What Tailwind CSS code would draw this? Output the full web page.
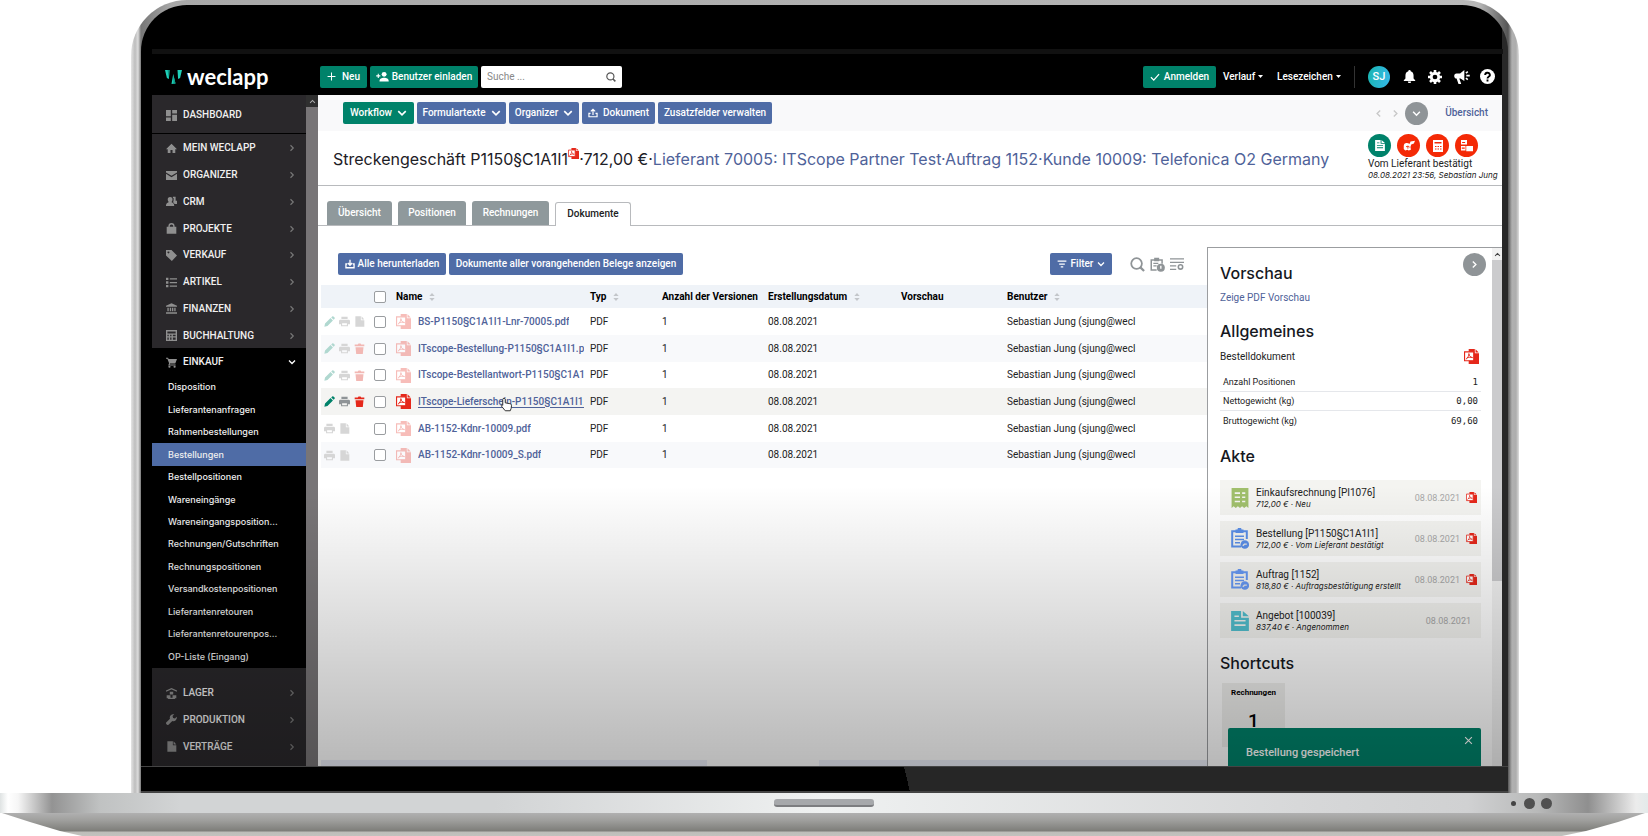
<!DOCTYPE html>
<html lang="de">
<head>
<meta charset="utf-8">
<meta name="viewport" content="width=device-width, initial-scale=1">
<title>weclapp – Streckengeschäft P1150§C1A1I1</title>
<script src="https://cdn.jsdelivr.net/npm/@tailwindcss/browser@4"></script>
</head>
<body class="flex min-h-screen flex-col bg-white font-['Roboto','Noto_Sans',sans-serif] text-[10px] leading-[14px] text-[#222]">

<!-- Icon library -->
<svg class="hidden" aria-hidden="true">
  <defs>
    <symbol id="chev-r" viewBox="0 0 16 16"><path d="M5 2.5 10.5 8 5 13.5" fill="none" stroke="currentColor" stroke-width="2.4"/></symbol>
    <symbol id="chev-l" viewBox="0 0 16 16"><path d="M11 2.5 5.5 8l5.500 5.500" fill="none" stroke="currentColor" stroke-width="2.4"/></symbol>
    <symbol id="chev-d" viewBox="0 0 16 16"><path d="M2 5 8 11 14 5" fill="none" stroke="currentColor" stroke-width="2.600"/></symbol>
    <symbol id="chev-u" viewBox="0 0 16 16"><path d="M2.500 11 8 5.500 13.500 11" fill="none" stroke="currentColor" stroke-width="2.4"/></symbol>
    <symbol id="caret" viewBox="0 0 10 6"><path d="M0 0h10L5 6z" fill="currentColor"/></symbol>
    <symbol id="plus" viewBox="0 0 16 16"><path d="M8 1v14M1 8h14" stroke="currentColor" stroke-width="1.800"/></symbol>
    <symbol id="x" viewBox="0 0 16 16"><path d="m2 2 12 12M14 2 2 14" stroke="currentColor" stroke-width="2"/></symbol>
    <symbol id="check" viewBox="0 0 16 16"><path d="m1.500 8.500 4.500 4.500L14.500 3.500" fill="none" stroke="currentColor" stroke-width="2"/></symbol>
    <symbol id="search" viewBox="0 0 16 16"><circle cx="7" cy="7" r="5.700" fill="none" stroke="currentColor" stroke-width="1.900"/><path d="m10.800 10.800 4.200 4.200" stroke="currentColor" stroke-width="2.400"/></symbol>
    <symbol id="user-plus" viewBox="0 0 24 20"><circle cx="15" cy="6" r="4.500" fill="currentColor"/><path d="M6.500 19c0-5 4-6.500 8.500-6.500s8.500 1.500 8.500 6.500zM3.200 5h2v2.800H8v2H5.200v2.800h-2V9.800H.4v-2h2.800z" fill="currentColor"/></symbol>
    <symbol id="upload" viewBox="0 0 16 16"><path d="M8 11V2.500M4.500 5.500 8 2l3.500 3.500M4 8.500H1.500V14h13V8.500H12" fill="none" stroke="currentColor" stroke-width="1.900"/></symbol>
    <symbol id="download" viewBox="0 0 16 16"><path d="M8 1v8.500M4.500 6.500 8 10l3.500-3.500M3.500 8h-2v6h13V8h-2" fill="none" stroke="currentColor" stroke-width="2.100"/></symbol>
    <symbol id="filter" viewBox="0 0 16 16"><path d="M1 3.500h14M3.500 8h9M6 12.500h4" stroke="currentColor" stroke-width="2"/></symbol>
    <symbol id="dash" viewBox="0 0 16 16"><path d="M0 0h7v9H0zM9 0h7v5H9zM0 11h7v5H0zM9 7h7v9H9z" fill="currentColor"/></symbol>
    <symbol id="home" viewBox="0 0 16 16"><path d="M8 1 0 9h2.500v5.500h4V10h3v4.500h4V9H16z" fill="currentColor"/></symbol>
    <symbol id="mail" viewBox="0 0 16 16"><path d="M0 1.500h16V3.500L8 8.500 0 3.500zM0 5.500l8 5 8-5V14.500H0z" fill="currentColor"/></symbol>
    <symbol id="crm" viewBox="0 0 16 16"><path d="M6 1.500c2.500 0 3.500 1.800 3.500 3.700 0 1.600-.6 2.800-1.500 3.600.8 1.200 4 1.200 4 5.700H0c0-4.500 3.200-4.500 4-5.700C3.100 8 2.500 6.800 2.500 5.200c0-1.900 1-3.700 3.500-3.700z" fill="currentColor"/><path d="M10 1h4v6h2v4.500h-3.500c-.5-1.200-1.300-2-2.300-2.500.6-1 .9-2.200.9-3.800V3H10z" fill="currentColor"/></symbol>
    <symbol id="bag" viewBox="0 0 16 16"><path d="M1 5.500h14v10H1z" fill="currentColor"/><path d="M4.500 7V4.500a3.500 3.500 0 0 1 7 0V7" fill="none" stroke="currentColor" stroke-width="2"/></symbol>
    <symbol id="tag" viewBox="0 0 16 16"><path fill-rule="evenodd" d="M0 0h8l8 8-7.500 8L0 8zm3.500 2a1.400 1.400 0 1 0 .1 0z" fill="currentColor"/></symbol>
    <symbol id="list" viewBox="0 0 16 16"><path d="M0 1h3.500v3.500H0zM0 6.300h3.500v3.500H0zM0 11.500h3.500V15H0zM5.500 1.800H16v1.900H5.500zM5.500 7.100H16V9H5.500zM5.500 12.300H16v1.900H5.500z" fill="currentColor"/></symbol>
    <symbol id="bank" viewBox="0 0 16 16"><path d="M8 .5 16 4v1.500H0V4zM2 7h2v5H2zM5.500 7h2v5h-2zM8.700 7h2v5h-2zM12 7h2v5h-2zM0 13.500h16V15.500H0z" fill="currentColor"/></symbol>
    <symbol id="calc" viewBox="0 0 16 16"><path fill-rule="evenodd" d="M0 0h16v16H0zm2 2v3h12V2zm0 5v2h2V7zm4 0v2h2V7zm4 0v2h4V7zm-8 4v3h2v-3zm4 0v3h2v-3zm4 0v3h4v-3z" fill="currentColor"/></symbol>
    <symbol id="cart" viewBox="0 0 16 16"><path d="M0 1h3l.8 2H16l-2.500 6.500H5.800l-.4 1.300H14v1.500H3.200L4.500 9 2 2.500H0z" fill="currentColor"/><circle cx="5" cy="14.200" r="1.600" fill="currentColor"/><circle cx="12.500" cy="14.200" r="1.600" fill="currentColor"/></symbol>
    <symbol id="stock" viewBox="0 0 16 16"><path d="M0 4.500 8 1l8 3.500M3 15h10" fill="none" stroke="currentColor" stroke-width="1.800"/><path d="M5.500 5.500h5v4h-5zM1 10.500h5.500V15H1zM9.500 10.500H15V15H9.500z" fill="currentColor"/></symbol>
    <symbol id="wrench" viewBox="0 0 16 16"><path d="M15.500 4 13 6.500 10.300 5.700 9.500 3 12 .5a5 5 0 0 0-6.200 6.400L.6 12a2 2 0 0 0 0 2.800l.6.600a2 2 0 0 0 2.800 0l5.200-5.200A5 5 0 0 0 15.500 4z" fill="currentColor"/></symbol>
    <symbol id="doc" viewBox="0 0 16 16"><path d="M2 .5h8V6h5v9.500H2zM11 .5 15 5h-4z" fill="currentColor"/></symbol>
    <symbol id="doc-lines" viewBox="0 0 16 18"><path fill-rule="evenodd" d="M0 0h9v6h7v12H0zm3 8v1.500h10V8zm0 4v1.500h10V12zM3 4v1.500h4V4zM10.500 0 16 4.800h-5.500z" fill="currentColor"/></symbol>
    <symbol id="receipt" viewBox="0 0 16 19"><path fill-rule="evenodd" d="M0 0h16v19l-2-1.700-2 1.700-2-1.700L8 19l-2-1.700L4 19l-2-1.700L0 19zm3 4v1.600h5V4zm7 0v1.600h3V4zM3 8v1.600h5V8zm7 0v1.600h3V8zm-7 4v1.600h5V12zm7 0v1.600h3V12z" fill="currentColor"/></symbol>
    <symbol id="order" viewBox="0 0 18 21"><path d="M10 18.500H1.200V3.200h14.600V11" fill="none" stroke="currentColor" stroke-width="2"/><path d="M4.500 1.500h2a2 2 0 0 1 4 0h2V5h-8zM4 7.500h9v1.600H4zM4 10.700h9v1.600H4zM4 14h5v1.600H4z" fill="currentColor"/><circle cx="13.800" cy="16.500" r="4.300" fill="currentColor"/><path d="m11.800 17.800 1.600-1.600h2.400" fill="none" stroke="#e8e8e8" stroke-width="1.300"/></symbol>
    <symbol id="pencil" viewBox="0 0 16 16"><path d="m.5 15.500 1-4.500L9.500 3l3.500 3.500-8 8zM10.500 2 12 .600c.5-.5 1.200-.5 1.700 0l1.700 1.700c.5.500.5 1.200 0 1.700L14 5.500z" fill="currentColor"/></symbol>
    <symbol id="print" viewBox="0 0 16 16"><path fill-rule="evenodd" d="M3.500 1h9v3.500h-9zM2 5.500h12a2 2 0 0 1 2 2v4.500h-3v3H3v-3H0V7.500a2 2 0 0 1 2-2zm2.500 5v3h7v-3z" fill="currentColor"/></symbol>
    <symbol id="trash" viewBox="0 0 16 16"><path d="M1 2.200h4.500L6.500.8h3l1 1.400H15V4.800H1zM2.200 6h11.600l-1 10H3.200z" fill="currentColor"/></symbol>
    <symbol id="pdf" viewBox="0 0 16 16"><path d="M5 0h6.500v4.500H16V16H5z" fill="#e5281b"/><path d="M12.300.300 15.700 3.700h-3.400z" fill="#e5281b"/><path d="M.6 3h9.800v9.500H.6z" fill="#fff" stroke="#e5281b" stroke-width="1.200"/><path d="M2 11c2-1.500 3.500-4 3.200-6.200M5.200 5c.4 2.500 1.800 4 4 4.200M3 9.600c2-.8 4-1 6-.6" fill="none" stroke="#e5281b" stroke-width="1"/></symbol>
    <symbol id="sort" viewBox="0 0 8 12"><path d="M4 0 8 4.500H0zM0 7.500h8L4 12z" fill="currentColor"/></symbol>
    <symbol id="clip" viewBox="0 0 18 18"><path d="M8 15.500H1.500v-12h13V8" fill="none" stroke="currentColor" stroke-width="1.800"/><path d="M5 1h6v4H5zM4 7h6v1.300H4zM4 10h4v1.300H4z" fill="currentColor"/><circle cx="13" cy="13" r="4.800" fill="currentColor"/><path d="M13 10.500v3.500" stroke="#fff" stroke-width="1.600"/></symbol>
    <symbol id="listcfg" viewBox="0 0 18 18"><path d="M0 2.500h18M0 7h18M0 11.500h8M0 16h8" stroke="currentColor" stroke-width="1.600"/><circle cx="13.500" cy="12.800" r="2.800" fill="none" stroke="currentColor" stroke-width="2"/></symbol>
    <symbol id="bell" viewBox="0 0 16 16"><path d="M8 0a1.500 1.500 0 0 1 1.500 1.500C12 2.200 13 4.300 13 7v3.500l2 2V13.500H1v-1l2-2V7c0-2.700 1-4.800 3.500-5.500A1.500 1.500 0 0 1 8 0zM6 14.300h4a2 2 0 0 1-4 0z" fill="currentColor"/></symbol>
    <symbol id="gear" viewBox="0 0 16 16"><circle cx="8" cy="8" r="4.300" fill="none" stroke="currentColor" stroke-width="3.200"/><path d="M8 0v3M8 13v3M0 8h3M13 8h3M2.300 2.300l2.200 2.200M11.500 11.500l2.200 2.200M2.300 13.700l2.200-2.200M11.500 4.500l2.200-2.200" stroke="currentColor" stroke-width="3"/></symbol>
    <symbol id="horn" viewBox="0 0 20 18"><path d="M13 0v14L8 11 6.500 11 9 18H5.500L3 11C1 11 0 9.700 0 7.700s1-3.300 3-3.300h4.500z" fill="currentColor"/><path d="M15 4 17.500 2M15.500 7.200H20M15 10.500 17.500 12.500" stroke="currentColor" stroke-width="2"/></symbol>
    <symbol id="help" viewBox="0 0 16 16"><circle cx="8" cy="8" r="8" fill="#fff"/><path d="M5.500 6.300a2.500 2.300 0 1 1 3.700 2C8.300 8.900 8 9.200 8 10.200M8 11.300v2" fill="none" stroke="#000" stroke-width="2"/></symbol>
  </defs>
</svg>

<!-- Laptop lid -->
<div class="ml-[131px] mr-[129px] flex flex-1 flex-col rounded-t-[56px] bg-[linear-gradient(90deg,#e4e4e4_0,#bdbdbd_4px,#dcdcdc_7px,#777_10px,#a8a8a8_40px,#b8b8b8_calc(100%-40px),#555_calc(100%-11px),#b0b0b0_calc(100%-7px),#adadad_calc(100%-3px),#ddd_100%)] pt-[5px] pr-[11px] pl-[10px]">
  <div class="flex flex-1 flex-col overflow-hidden rounded-t-[46px] bg-[linear-gradient(90deg,#000_calc(100%-6px),#282828_calc(100%-6px))]">
    <div class="mr-[5px] ml-[11px] mt-[44px] h-[5px] bg-[#111]"></div>

    <!-- Application screen -->
    <div class="relative mr-[6px] ml-[11px] flex flex-1 flex-col">

      <header class="flex h-[41px] items-center bg-black pt-[4px] text-white">
        <a href="#" class="flex w-[168px] items-center gap-[5px] pl-[13px] font-['Lato',sans-serif] text-[22px] leading-[24px] font-bold">
          <svg class="h-[14px] w-[17px] shrink-0" viewBox="0 0 17 14"><path d="M0 0h4.500l-.6 9-2-1zM17 0h-4.500l.6 9 2-1zM8.200 4 10.500 13.500 6.500 14z" fill="#1fd0b8"/><path d="M2.500 0h2l-.6 9zM8.200 4 10.500 13.500 8.500 13.700z" fill="#0a9a86"/></svg>
          weclapp
        </a>
        <button class="mr-[3px] flex h-[22px] w-[47px] items-center justify-center gap-[6px] rounded-[2px] bg-[#00826a] font-medium"><svg class="size-[9px]"><use href="#plus"/></svg>Neu</button>
        <button class="mr-[3px] flex h-[22px] w-[108px] items-center justify-center gap-[3px] rounded-[2px] bg-[#00826a] font-medium whitespace-nowrap"><svg class="h-[11px] w-[13px]"><use href="#user-plus"/></svg>Benutzer einladen</button>
        <label class="flex h-[22px] w-[141px] items-center rounded-[2px] bg-white px-[6px] text-[#555]">
          <input type="text" aria-label="Suche" placeholder="Suche ..." class="min-w-0 flex-1 bg-transparent text-[10px] outline-none placeholder:text-[#888]">
          <svg class="size-[10px]"><use href="#search"/></svg>
        </label>
        <div class="ml-auto flex items-center">
          <button class="mr-[7px] flex h-[22px] w-[73px] items-center justify-center gap-[4px] rounded-[2px] bg-[#00826a] font-medium"><svg class="size-[10px]"><use href="#check"/></svg>Anmelden</button>
          <button class="mr-[14px] flex w-[40px] items-center gap-[3px] font-medium">Verlauf<svg class="h-[3px] w-[5px] shrink-0"><use href="#caret"/></svg></button>
          <button class="mr-[13px] flex w-[64px] items-center gap-[3px] font-medium">Lesezeichen<svg class="h-[3px] w-[5px] shrink-0"><use href="#caret"/></svg></button>
          <span class="mr-[13px] h-[22px] w-px bg-[#333]"></span>
          <span class="mr-[13px] flex size-[22px] items-center justify-center rounded-full bg-[linear-gradient(100deg,#19b5b0,#35b8ea)] text-[11px] font-medium">SJ</span>
          <button aria-label="Benachrichtigungen" class="mr-[12px]"><svg class="size-[13px]"><use href="#bell"/></svg></button>
          <button aria-label="Einstellungen" class="mr-[12px]"><svg class="size-[14px]"><use href="#gear"/></svg></button>
          <button aria-label="Neuigkeiten" class="mr-[10px]"><svg class="h-[14px] w-[16px]"><use href="#horn"/></svg></button>
          <button aria-label="Hilfe" class="mr-[7px]"><svg class="size-[15px]"><use href="#help"/></svg></button>
        </div>
      </header>

      <div class="flex flex-1">
        <!-- Sidebar -->
        <nav class="flex w-[154px] flex-col bg-[#2a282b] text-[10px] font-medium text-[#f0f0f0]">
          <a href="#" class="flex h-[39px] items-center gap-[6px] border-b border-black pt-[2px] pl-[14px]"><svg class="size-[11px] text-[#8f8f8f]"><use href="#dash"/></svg>DASHBOARD</a>
          <ul class="grid h-[214px] auto-rows-fr [&_a]:flex [&_a]:h-full [&_a]:items-center [&_a]:gap-[6px] [&_a]:pt-[2px] [&_a]:pr-[10px] [&_a]:pl-[14px] [&_svg]:size-[11px] [&_svg]:text-[#8f8f8f] [&_svg:last-child]:ml-auto [&_svg:last-child]:size-[8px] [&_svg:last-child]:text-[#777]">
            <li><a href="#"><svg><use href="#home"/></svg>MEIN WECLAPP<svg><use href="#chev-r"/></svg></a></li>
            <li><a href="#"><svg><use href="#mail"/></svg>ORGANIZER<svg><use href="#chev-r"/></svg></a></li>
            <li><a href="#"><svg><use href="#crm"/></svg>CRM<svg><use href="#chev-r"/></svg></a></li>
            <li><a href="#"><svg><use href="#bag"/></svg>PROJEKTE<svg><use href="#chev-r"/></svg></a></li>
            <li><a href="#"><svg><use href="#tag"/></svg>VERKAUF<svg><use href="#chev-r"/></svg></a></li>
            <li><a href="#"><svg><use href="#list"/></svg>ARTIKEL<svg><use href="#chev-r"/></svg></a></li>
            <li><a href="#"><svg><use href="#bank"/></svg>FINANZEN<svg><use href="#chev-r"/></svg></a></li>
            <li><a href="#"><svg><use href="#calc"/></svg>BUCHHALTUNG<svg><use href="#chev-r"/></svg></a></li>
          </ul>
          <div class="bg-black">
            <a href="#" class="flex h-[28px] items-center gap-[6px] pr-[10px] pl-[14px]"><svg class="size-[11px] text-[#8f8f8f]"><use href="#cart"/></svg>EINKAUF<svg class="ml-auto size-[8px] text-white"><use href="#chev-d"/></svg></a>
            <ul class="grid h-[292px] auto-rows-fr font-['Inter',sans-serif] text-[9px] [&_a]:flex [&_a]:h-full [&_a]:items-center [&_a]:pl-[16px]">
              <li><a href="#">Disposition</a></li>
              <li><a href="#">Lieferantenanfragen</a></li>
              <li><a href="#">Rahmenbestellungen</a></li>
              <li class="bg-[#4f6ca6]"><a href="#" aria-current="page">Bestellungen</a></li>
              <li><a href="#">Bestellpositionen</a></li>
              <li><a href="#">Wareneingänge</a></li>
              <li><a href="#">Wareneingangsposition...</a></li>
              <li><a href="#">Rechnungen/Gutschriften</a></li>
              <li><a href="#">Rechnungspositionen</a></li>
              <li><a href="#">Versandkostenpositionen</a></li>
              <li><a href="#">Lieferantenretouren</a></li>
              <li><a href="#">Lieferantenretourenpos...</a></li>
              <li><a href="#">OP-Liste (Eingang)</a></li>
            </ul>
          </div>
          <ul class="mt-[11px] grid h-[80px] auto-rows-fr [&_a]:flex [&_a]:h-full [&_a]:items-center [&_a]:gap-[6px] [&_a]:pt-[2px] [&_a]:pr-[10px] [&_a]:pl-[14px] [&_svg]:size-[11px] [&_svg]:text-[#8f8f8f] [&_svg:last-child]:ml-auto [&_svg:last-child]:size-[8px] [&_svg:last-child]:text-[#777]">
            <li><a href="#"><svg><use href="#stock"/></svg>LAGER<svg><use href="#chev-r"/></svg></a></li>
            <li><a href="#"><svg><use href="#wrench"/></svg>PRODUKTION<svg><use href="#chev-r"/></svg></a></li>
            <li><a href="#"><svg><use href="#doc"/></svg>VERTRÄGE<svg><use href="#chev-r"/></svg></a></li>
          </ul>
        </nav>
        <div class="flex w-[12px] flex-col items-center bg-[#787577]"><span class="flex h-[12px] w-full items-center justify-center bg-[#2f2f2f] text-[#aaa]"><svg class="size-[7px]"><use href="#chev-u"/></svg></span></div>

        <!-- Content -->
        <main class="flex min-w-0 flex-1 flex-col bg-white">
          <div class="flex h-[36px] items-center gap-[3px] bg-[#f9f9fa] pr-[14px] pl-[25px] font-medium text-white [&>button]:flex [&>button]:h-[22px] [&>button]:items-center [&>button]:justify-center [&>button]:gap-[5px] [&>button]:rounded-[2px] [&>button]:whitespace-nowrap">
            <button class="w-[71px] bg-[#00826a]">Workflow<svg class="size-[10px]"><use href="#chev-d"/></svg></button>
            <button class="w-[89px] bg-[#4f6ca6]">Formulartexte<svg class="size-[10px]"><use href="#chev-d"/></svg></button>
            <button class="w-[70px] bg-[#4f6ca6]">Organizer<svg class="size-[10px]"><use href="#chev-d"/></svg></button>
            <button class="w-[73px] bg-[#4f6ca6]"><svg class="size-[10px]"><use href="#upload"/></svg>Dokument</button>
            <button class="w-[114px] bg-[#4f6ca6]">Zusatzfelder verwalten</button>
            <div class="ml-auto flex items-center">
              <svg class="mr-[8px] size-[9px] text-[#c8c8c8]"><use href="#chev-l"/></svg>
              <svg class="mr-[5px] size-[9px] text-[#c8c8c8]"><use href="#chev-r"/></svg>
              <button aria-label="Mehr" class="mr-[17px] flex size-[23px] items-center justify-center rounded-full bg-[#8f9497]"><svg class="size-[9px]"><use href="#chev-d"/></svg></button>
              <a href="#" class="text-[#4f6299]">Übersicht</a>
            </div>
          </div>

          <div class="flex h-[55px] items-start justify-between border-b border-[#b8babd] pl-[15px]">
            <h1 class="flex items-start pt-[17px] font-['Inter',sans-serif] text-[16px] leading-[22px] whitespace-nowrap text-[#1d2026]">Streckengeschäft P1150§C1A1I1<svg class="size-[11px]"><use href="#pdf"/></svg>·712,00 €·<a href="#" class="text-[#4f6299]">Lieferant 70005: ITScope Partner Test·Auftrag 1152·Kunde 10009: Telefonica O2 Germany</a></h1>
            <div class="w-[134px] pt-[3px] whitespace-nowrap">
              <div class="flex gap-[6px] text-white [&>span]:flex [&>span]:size-[23px] [&>span]:items-center [&>span]:justify-center [&>span]:rounded-full">
                <span class="bg-[#00826a]"><svg class="h-[11px] w-[10px]"><use href="#doc-lines"/></svg></span>
                <span class="bg-[#f42a06]"><svg class="size-[12px]" viewBox="0 0 16 16"><path d="M1 8c0-3 2-4.500 4.500-4L9 5l1-3 6-1-1.500 3.500L11 6l-1 3 .5 4-3 1L6 13l-3 1-2-2z" fill="#fff"/><path d="m4 9 3-1 2 2M6.500 8v3.500" stroke="#f42a06" fill="none" stroke-width="1.200"/></svg></span>
                <span class="bg-[#f42a06]"><svg class="h-[12px] w-[10px]" viewBox="0 0 10 12"><path fill-rule="evenodd" d="M0 0h10v12H0zm1.500 2v1.500h7V2zM2 6v1h1.500V6zm2.500 0v1H6V6zM7 6v1h1.500V6zM2 8.500v1h1.500v-1zm2.500 0v1H6v-1zm2.500 0v1h1.500v-1z" fill="#fff"/></svg></span>
                <span class="bg-[#f42a06]"><svg class="size-[12px]" viewBox="0 0 16 16"><path fill-rule="evenodd" d="M0 0h8v6H0zm1.500 2.500V4h4V2.500zM0 8h6v6H0zm1 2v1.500h4V10zM7 8h9v7H7z" fill="#fff"/></svg></span>
              </div>
              <p class="text-[10px] leading-[13px]">Vom Lieferant bestätigt</p>
              <p class="font-['Inter',sans-serif] text-[8px] leading-[10px] italic">08.08.2021 23:56, Sebastian Jung</p>
            </div>
          </div>

          <div role="tablist" class="flex h-[40px] items-end gap-[6px] border-b border-[#b8babd] pl-[9px] font-medium text-white [&>button]:h-[24px] [&>button]:rounded-t-[3px]">
            <button role="tab" class="w-[65px] bg-[#8f999c]">Übersicht</button>
            <button role="tab" class="w-[68px] bg-[#8f999c]">Positionen</button>
            <button role="tab" class="w-[77px] bg-[#8f999c]">Rechnungen</button>
            <button role="tab" aria-selected="true" class="-mb-px w-[76px] border border-b-0 border-[#b8babd] bg-white pb-[2px] text-[#222]">Dokumente</button>
          </div>

          <div class="flex min-h-0 flex-1">
            <section class="flex min-w-0 flex-1 flex-col pt-[27px] pl-[3px]">
              <div class="flex items-center gap-[3px] pr-[23px] pl-[17px] font-medium text-white">
                <button class="flex h-[22px] w-[108px] items-center justify-center gap-[3px] rounded-[2px] bg-[#4f6ca6] whitespace-nowrap"><svg class="size-[10px]"><use href="#download"/></svg>Alle herunterladen</button>
                <button class="flex h-[22px] w-[234px] items-center justify-center rounded-[2px] bg-[#4f6ca6] whitespace-nowrap">Dokumente aller vorangehenden Belege anzeigen</button>
                <button class="mr-[15px] ml-auto flex h-[22px] w-[62px] items-center justify-center gap-[4px] rounded-[2px] bg-[#4f6ca6]"><svg class="size-[10px]"><use href="#filter"/></svg>Filter<svg class="size-[8px]"><use href="#chev-d"/></svg></button>
                <button aria-label="Suchen" class="mr-[2px] text-[#8f9497]"><svg class="size-[15px]"><use href="#search"/></svg></button>
                <button aria-label="Zwischenablage" class="mr-[2px] text-[#8f9497]"><svg class="size-[15px]"><use href="#clip"/></svg></button>
                <button aria-label="Spalten" class="text-[#8f9497]"><svg class="size-[14px]"><use href="#listcfg"/></svg></button>
              </div>

              <table class="mt-[10px] w-full table-fixed text-left text-[10px] whitespace-nowrap [&_input]:block [&_input]:size-[12px] [&_input]:appearance-none [&_input]:rounded-[2px] [&_input]:border [&_input]:border-[#9a9da0] [&_input]:bg-white [&_td]:p-0 [&_th]:p-0 [&_tbody_tr]:h-[27px] [&_tbody_tr:nth-child(3n)]:h-[26px]">
                <colgroup><col class="w-[53px]"><col class="w-[22px]"><col class="w-[194px]"><col class="w-[72px]"><col class="w-[106px]"><col class="w-[133px]"><col class="w-[106px]"><col></colgroup>
                <thead class="bg-[#eff3f8] text-black [&_svg]:ml-[7px] [&_svg]:inline [&_svg]:h-[8px] [&_svg]:w-[6px] [&_svg]:text-[#c3c6ca]">
                  <tr class="h-[23px]">
                    <th aria-label="Aktionen"></th>
                    <th><input type="checkbox" aria-label="Alle auswählen"></th>
                    <th>Name<svg><use href="#sort"/></svg></th>
                    <th>Typ<svg><use href="#sort"/></svg></th>
                    <th>Anzahl der Versionen</th>
                    <th>Erstellungsdatum<svg><use href="#sort"/></svg></th>
                    <th>Vorschau</th>
                    <th>Benutzer<svg><use href="#sort"/></svg></th>
                  </tr>
                </thead>
                <tbody class="[&_a]:block [&_a]:max-w-[166px] [&_a]:overflow-hidden [&_a]:font-medium [&_a]:text-[#4f6299] [&_td:nth-child(1)>div]:flex [&_td:nth-child(1)>div]:gap-[4px] [&_td:nth-child(1)>div]:pl-[3px] [&_td:nth-child(1)_svg]:size-[11px] [&_td:nth-child(3)>div]:flex [&_td:nth-child(3)>div]:items-center [&_td:nth-child(3)>div]:gap-[7px] [&_td:nth-child(3)_svg]:size-[15px] [&_td:nth-child(3)_svg]:shrink-0">
                  <tr>
                    <td><div><svg class="text-[#b0d8d0]"><use href="#pencil"/></svg><svg class="text-[#d6d6d6]"><use href="#print"/></svg><svg class="text-[#d6d6d6]"><use href="#doc"/></svg></div></td>
                    <td><input type="checkbox" aria-label="Zeile 1"></td>
                    <td><div><svg class="opacity-30"><use href="#pdf"/></svg><a href="#">BS-P1150§C1A1I1-Lnr-70005.pdf</a></div></td>
                    <td>PDF</td><td>1</td><td>08.08.2021</td><td></td><td>Sebastian Jung (sjung@wecl</td>
                  </tr>
                  <tr class="bg-[#f8f9fb]">
                    <td><div><svg class="text-[#b0d8d0]"><use href="#pencil"/></svg><svg class="text-[#d6d6d6]"><use href="#print"/></svg><svg class="text-[#f2b8b4]"><use href="#trash"/></svg></div></td>
                    <td><input type="checkbox" aria-label="Zeile 2"></td>
                    <td><div><svg class="opacity-30"><use href="#pdf"/></svg><a href="#">ITscope-Bestellung-P1150§C1A1I1.pd</a></div></td>
                    <td>PDF</td><td>1</td><td>08.08.2021</td><td></td><td>Sebastian Jung (sjung@wecl</td>
                  </tr>
                  <tr>
                    <td><div><svg class="text-[#b0d8d0]"><use href="#pencil"/></svg><svg class="text-[#d6d6d6]"><use href="#print"/></svg><svg class="text-[#f2b8b4]"><use href="#trash"/></svg></div></td>
                    <td><input type="checkbox" aria-label="Zeile 3"></td>
                    <td><div><svg class="opacity-30"><use href="#pdf"/></svg><a href="#">ITscope-Bestellantwort-P1150§C1A1I</a></div></td>
                    <td>PDF</td><td>1</td><td>08.08.2021</td><td></td><td>Sebastian Jung (sjung@wecl</td>
                  </tr>
                  <tr class="bg-[#f4f4f2]">
                    <td><div><svg class="text-[#00826a]"><use href="#pencil"/></svg><svg class="text-[#8f9497]"><use href="#print"/></svg><svg class="text-[#e5281b]"><use href="#trash"/></svg></div></td>
                    <td><input type="checkbox" aria-label="Zeile 4"></td>
                    <td><div class="relative"><svg><use href="#pdf"/></svg><a href="#" class="underline underline-offset-2">ITscope-Lieferschein-P1150§C1A1I1.p</a>
                      <svg class="absolute top-[3px] left-[103px]" viewBox="0 0 16 18"><path d="M5 1.500c1 0 1.500.600 1.500 1.500v4l5.500 1c1.500.300 2 1 2 2.500 0 2-.5 4-1.500 6h-6L2 11c-.8-1.300.5-2 1.500-1V3c0-.9.500-1.500 1.500-1.500z" fill="#fff" stroke="#333" stroke-width="1.200"/></svg></div></td>
                    <td>PDF</td><td>1</td><td>08.08.2021</td><td></td><td>Sebastian Jung (sjung@wecl</td>
                  </tr>
                  <tr>
                    <td><div><svg class="text-[#d6d6d6]"><use href="#print"/></svg><svg class="text-[#d6d6d6]"><use href="#doc"/></svg></div></td>
                    <td><input type="checkbox" aria-label="Zeile 5"></td>
                    <td><div><svg class="opacity-30"><use href="#pdf"/></svg><a href="#">AB-1152-Kdnr-10009.pdf</a></div></td>
                    <td>PDF</td><td>1</td><td>08.08.2021</td><td></td><td>Sebastian Jung (sjung@wecl</td>
                  </tr>
                  <tr class="bg-[#f8f9fb]">
                    <td><div><svg class="text-[#d6d6d6]"><use href="#print"/></svg><svg class="text-[#d6d6d6]"><use href="#doc"/></svg></div></td>
                    <td><input type="checkbox" aria-label="Zeile 6"></td>
                    <td><div><svg class="opacity-30"><use href="#pdf"/></svg><a href="#">AB-1152-Kdnr-10009_S.pdf</a></div></td>
                    <td>PDF</td><td>1</td><td>08.08.2021</td><td></td><td>Sebastian Jung (sjung@wecl</td>
                  </tr>
                </tbody>
              </table>
              <div class="mt-auto h-[6px] bg-[#eceff9]"><div class="ml-[386px] h-full w-[112px] bg-white"></div></div>
            </section>

            <!-- Preview panel -->
            <aside class="mt-[21px] flex w-[295px] border-t border-l border-[#9b9da0]">
              <div class="flex-1 pt-[15px] pr-[11px] pl-[12px] [&_h2]:font-['Inter',sans-serif] [&_h2]:text-[16px] [&_h2]:leading-[20px] [&_h2]:font-medium [&_h2]:text-[#15181e]">
                <div class="relative">
                  <h2>Vorschau</h2>
                  <button aria-label="Einklappen" class="absolute top-[-10px] right-[-5px] flex size-[23px] items-center justify-center rounded-full bg-[#8f9497] text-white"><svg class="size-[9px]"><use href="#chev-r"/></svg></button>
                </div>
                <a href="#" class="mt-[8px] block text-[#4f6299]">Zeige PDF Vorschau</a>
                <h2 class="mt-[16px]">Allgemeines</h2>
                <div class="mt-[8px] flex items-center justify-between pr-[2px]">Bestelldokument<svg class="size-[15px]"><use href="#pdf"/></svg></div>
                <dl class="mt-[9px] text-[9px] [&>div]:flex [&>div]:h-[19px] [&>div]:items-center [&>div]:justify-between [&>div]:px-[3px] [&_dd]:font-['DejaVu_Sans_Mono',monospace] [&_dd]:text-[9px]">
                  <div class="border-b border-gray-200"><dt>Anzahl Positionen</dt><dd>1</dd></div>
                  <div class="border-b border-gray-200"><dt>Nettogewicht (kg)</dt><dd>0,00</dd></div>
                  <div><dt>Bruttogewicht (kg)</dt><dd>69,60</dd></div>
                </dl>
                <h2 class="mt-[16px]">Akte</h2>
                <ul class="mt-[14px] grid gap-[6px] whitespace-nowrap [&>li]:flex [&>li]:h-[35px] [&>li]:items-center [&>li]:bg-[#f4f4f1] [&>li]:pr-[4px] [&>li]:pl-[11px] [&_div]:ml-[7px] [&_div]:flex-1 [&_i]:block [&_i]:font-['Inter',sans-serif] [&_i]:text-[8px] [&_i]:leading-[10px] [&_b]:block [&_b]:text-[10px] [&_b]:leading-[13px] [&_b]:font-normal [&_time]:mr-[6px] [&_time]:text-[9px] [&_time]:text-[#a8a8a8]">
                  <li><svg class="h-[20px] w-[18px] text-[#a0bf6c]"><use href="#receipt"/></svg><div><b>Einkaufsrechnung [PI1076]</b><i>712,00 € · Neu</i></div><time>08.08.2021</time><svg class="size-[11px]"><use href="#pdf"/></svg></li>
                  <li><svg class="h-[21px] w-[18px] text-[#5b8fe8]"><use href="#order"/></svg><div><b>Bestellung [P1150§C1A1I1]</b><i>712,00 € · Vom Lieferant bestätigt</i></div><time>08.08.2021</time><svg class="size-[11px]"><use href="#pdf"/></svg></li>
                  <li><svg class="h-[21px] w-[18px] text-[#6699f5]"><use href="#order"/></svg><div><b>Auftrag [1152]</b><i>818,80 € · Auftragsbestätigung erstellt</i></div><time>08.08.2021</time><svg class="size-[11px]"><use href="#pdf"/></svg></li>
                  <li><svg class="h-[20px] w-[18px] text-[#52c0cf]"><use href="#doc-lines"/></svg><div><b>Angebot [100039]</b><i>837,40 € · Angenommen</i></div><time>08.08.2021</time></li>
                </ul>
                <h2 class="mt-[15px]">Shortcuts</h2>
                <a href="#" class="mt-[10px] ml-[2px] block h-[64px] w-[63px] bg-[#f0f0ee] pt-[3px] text-center text-[8px] font-bold text-black">Rechnungen<span class="mt-[10px] block text-[19px] leading-[22px] font-medium">1</span></a>
              </div>
              <div class="w-[10px] bg-[#f2f2f2] text-[#444]">
                <span class="flex h-[12px] items-center justify-center"><svg class="size-[7px]"><use href="#chev-u"/></svg></span>
                <div class="h-[321px] bg-[#cbcbcd]"></div>
              </div>
            </aside>
          </div>
        </main>
      </div>

      <div role="status" class="absolute right-[21px] bottom-0 flex h-[38px] w-[253px] items-start rounded-t-[2px] bg-[#00826a] pt-[18px] pl-[18px] text-[11px] font-medium text-white">Bestellung gespeichert
        <button aria-label="Schließen" class="absolute top-[8px] right-[8px]"><svg class="size-[9px]"><use href="#x"/></svg></button>
      </div>
      <!-- Shading towards the lower edge of the display -->
      <div class="pointer-events-none absolute inset-x-0 bottom-0 h-[280px] bg-linear-to-b from-black/0 to-black/28"></div>
    </div>

    <!-- Lower bezel with reflection -->
    <div class="h-[27px] border-t border-b-2 border-[#444] bg-[linear-gradient(76deg,#000_56%,#262626_56%)]"></div>
  </div>
</div>

<!-- Laptop base -->
<div class="relative flex h-[20px] items-center justify-center bg-[linear-gradient(90deg,#dfe3e3_0,#fff_8px,#f6f6f6_18px,#939393_52px,#c0c2c2_100px,#d2d4d5_180px,#d2d4d5_30%,#eff1f1_50%,#d6d7d8_80%,#d0d1d2_calc(100%-180px),#b8b9b9_calc(100%-110px),#8f8f8f_calc(100%-60px),#ececec_calc(100%-12px),#e4eaea_100%)]">
  <div class="h-[8px] w-[100px] rounded-[3px] border-b-2 border-[#7c7d80] bg-[#a6a8ab]"></div>
  <div class="absolute right-[96px] flex items-center gap-[8px]"><span class="size-[5px] rounded-full bg-[#444]"></span><span class="size-[11px] rounded-full bg-[#505050]"></span><span class="-ml-[2px] size-[11px] rounded-full bg-[#505050]"></span></div>
</div>
<div class="h-[23px] bg-[linear-gradient(180deg,#b0b0b0_0,#a0a09e_7px,#7d7d79_18px,#bdbdb9_19px,#c2c2be_23px)] [clip-path:polygon(2px_0,calc(100%-3px)_0,calc(100%-30px)_9px,calc(100%-62px)_18px,calc(100%-86px)_100%,82px_100%,60px_18px,30px_9px)]"></div>
</body>
</html>
